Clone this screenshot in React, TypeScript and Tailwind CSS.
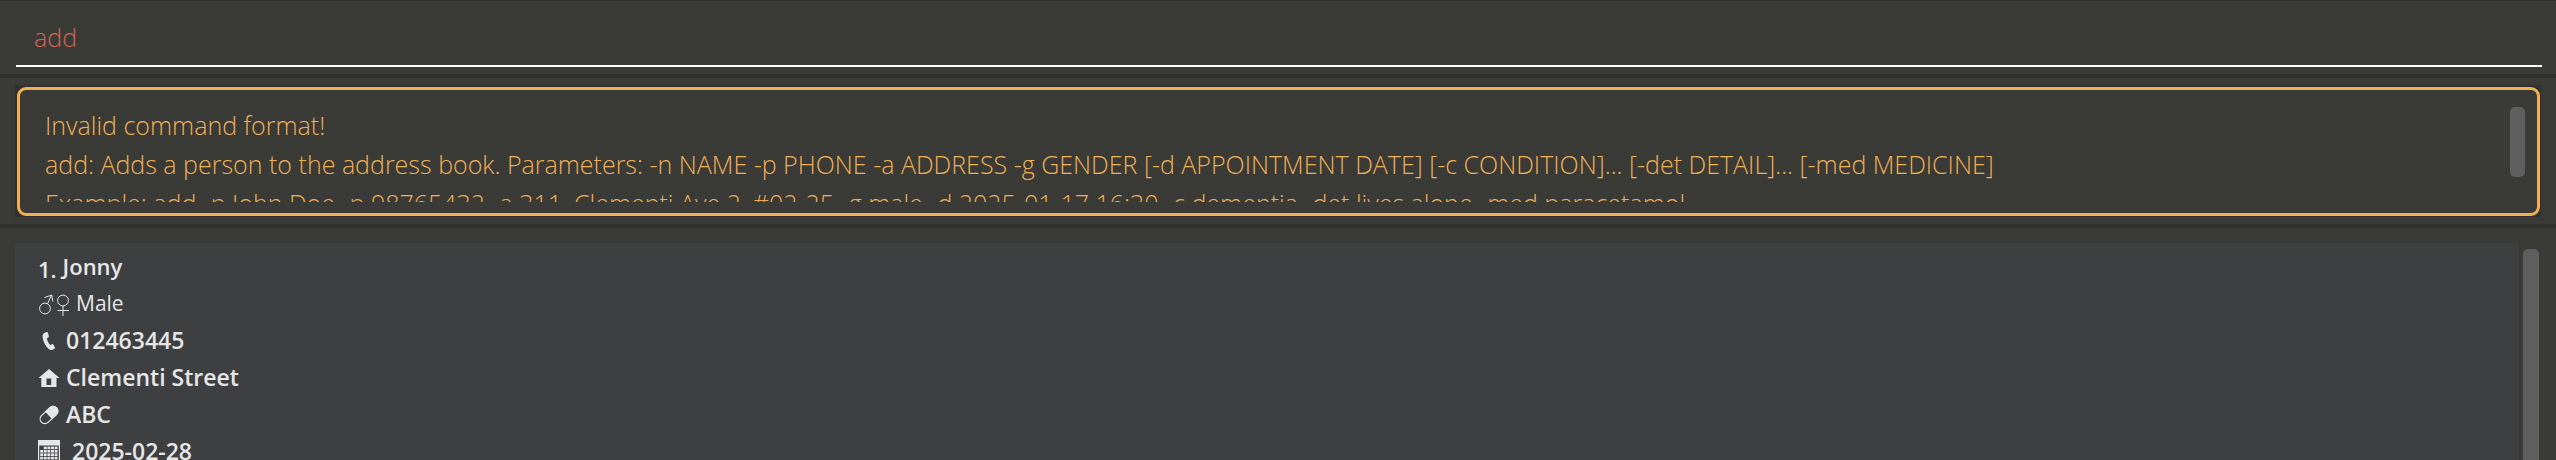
import type { ReactNode } from "react";

const RESULT = [
  "Invalid command format!",
  "add: Adds a person to the address book. Parameters: -n NAME -p PHONE -a ADDRESS -g GENDER [-d APPOINTMENT DATE] [-c CONDITION]... [-det DETAIL]... [-med MEDICINE]",
  "Example: add -n John Doe -p 98765432 -a 311, Clementi Ave 2, #02-25 -g male -d 2025-01-17 16:30 -c dementia -det lives alone -med paracetamol",
].join("\n");

function GenderIcon() {
  return (
    <svg className="h-6 w-8 shrink-0" viewBox="0 0 32 24" fill="none" stroke="currentColor" strokeWidth="1" aria-hidden="true">
      <circle cx="7" cy="16.5" r="5.4" />
      <path d="M9.6 11.6 13.5 3.2M6.5 5.6 13.700 3 14.800 9.500" />
      <circle cx="25" cy="8.500" r="5.4" />
      <path d="M25 13.900V24M19.5 18.5H31" />
    </svg>
  );
}

function PhoneIcon() {
  return (
    <svg className="h-6 w-6 shrink-0" viewBox="0 0 24 24" fill="currentColor" aria-hidden="true">
      <path d="M6.2 4 8.6 3C9.2 2.8 9.6 3 9.8 3.6L10.9 7C11 7.500 10.900 7.900 10.500 8.200L8.900 9.300C9.300 12 10.400 14.200 12.200 15.900L14.100 15.200C14.600 15 15 15.100 15.300 15.500L17 18.400C17.300 18.900 17.200 19.300 16.700 19.600L14.800 20.700C13.700 21.300 12.300 21.200 11.100 20.200C7.600 17.600 5.200 13.200 4.600 8.300C4.400 6.200 4.900 4.700 6.200 4Z" />
    </svg>
  );
}

function HomeIcon() {
  return (
    <svg className="h-6 w-6 shrink-0" viewBox="0 0 24 24" fill="currentColor" aria-hidden="true">
      <path fillRule="evenodd" d="M11 3 21.500 12H18.500V21H3.300V12H.5ZM8.500 12.500V19H13.200V12.500Z" />
    </svg>
  );
}

function PillIcon() {
  return (
    <svg className="h-6 w-6 shrink-0" viewBox="0 0 24 24" aria-hidden="true">
      <g transform="rotate(-43 11 12)">
        <rect x="0.600" y="7.300" width="20.800" height="9.400" rx="4.700" fill="none" stroke="currentColor" strokeWidth="1.200" />
        <path d="M10.500 6.700H16.700A5.300 5.300 0 0 1 16.700 17.300H10.500Z" fill="currentColor" />
      </g>
    </svg>
  );
}

function CalendarIcon() {
  const cells: ReactNode[] = [];
  for (let row = 0; row < 5; row++) {
    for (let col = 0; col < 5; col++) {
      if ((row === 0 && col === 0) || (row === 4 && col > 2)) continue;
      cells.push(<rect key={`${row}-${col}`} x={2.2 + col * 3.6} y={6.6 + row * 3.4} width="2.900" height="2.600" />);
    }
  }
  return (
    <svg className="h-6 w-6 shrink-0" viewBox="0 0 24 24" fill="currentColor" aria-hidden="true">
      <path fillRule="evenodd" d="M0 0H22V24H0ZM1.200 5.500V22.800H20.800V5.500Z" />
      {cells}
    </svg>
  );
}

function Divider() {
  return <div className="h-1 shrink-0 bg-[#31312f]" />;
}

function Detail({ icon, children }: { icon: ReactNode; children: ReactNode }) {
  return (
    <li className="flex items-center gap-1 text-[23px] leading-[37px] font-semibold">
      {icon}
      {children}
    </li>
  );
}

export default function App() {
  return (
    <main className="flex h-screen flex-col overflow-hidden border-t border-[#31312f] bg-[#3a3a37] font-['Open_Sans','Noto_Sans',sans-serif] text-[#e6e6e6]">
      <form className="shrink-0 pr-[14px] pb-[7px] pl-4" onSubmit={(e) => e.preventDefault()}>
        <input
          aria-label="Command"
          defaultValue="add"
          spellCheck={false}
          className="block h-[66px] w-full border-b-2 border-white bg-transparent px-[18px] pt-3 pb-1 text-[25px] font-light text-[#d06651] outline-none"
        />
      </form>
      <Divider />
      <section className="shrink-0 px-[15px] pt-[7px] pb-[7px]" aria-label="Result">
        <div className="border-2 border-r-1 border-b-1 border-[#31312f] bg-[#31312f]">
          <div className="flex items-start rounded-[9px] border-3 border-[#f1b055] bg-[#3a3a37] pt-[16px] pr-[12px] pb-[11px] pl-[25px]">
            <textarea
              readOnly
              aria-label="Command result"
              value={RESULT}
              spellCheck={false}
              className="block h-[96px] min-w-0 flex-1 resize-none overflow-hidden bg-transparent text-[25px] leading-[39px] font-light text-[#f1b055] outline-none"
            />
            <div className="mt-px h-[70px] w-[15px] rounded-[5px] bg-[#5f5f5f]" />
          </div>
        </div>
      </section>
      <Divider />
      <section className="flex min-h-0 flex-1 gap-1 pt-[15px] pr-[17px] pl-[15px]" aria-label="Persons">
        <ul className="min-w-0 flex-1 overflow-hidden bg-[#3e3f41]">
          <li className="px-[23px] pt-[5px]">
            <h2 className="flex h-[37px] gap-1.5 text-[22px] leading-[37px] font-semibold">
              <span className="pt-[3px]">1.</span>
              <span>Jonny</span>
            </h2>
            <ul>
              <li className="flex items-center gap-1.5 text-[21px] leading-[37px]">
                <GenderIcon />
                Male
              </li>
              <Detail icon={<PhoneIcon />}>012463445</Detail>
              <Detail icon={<HomeIcon />}>Clementi Street</Detail>
              <Detail icon={<PillIcon />}>ABC</Detail>
              <Detail icon={<CalendarIcon />}>
                <span className="pl-1.5">2025-02-28</span>
              </Detail>
            </ul>
          </li>
        </ul>
        <div className="mt-1.5 w-4 rounded-t-[5px] bg-[#5f5f5f]" />
      </section>
    </main>
  );
}
